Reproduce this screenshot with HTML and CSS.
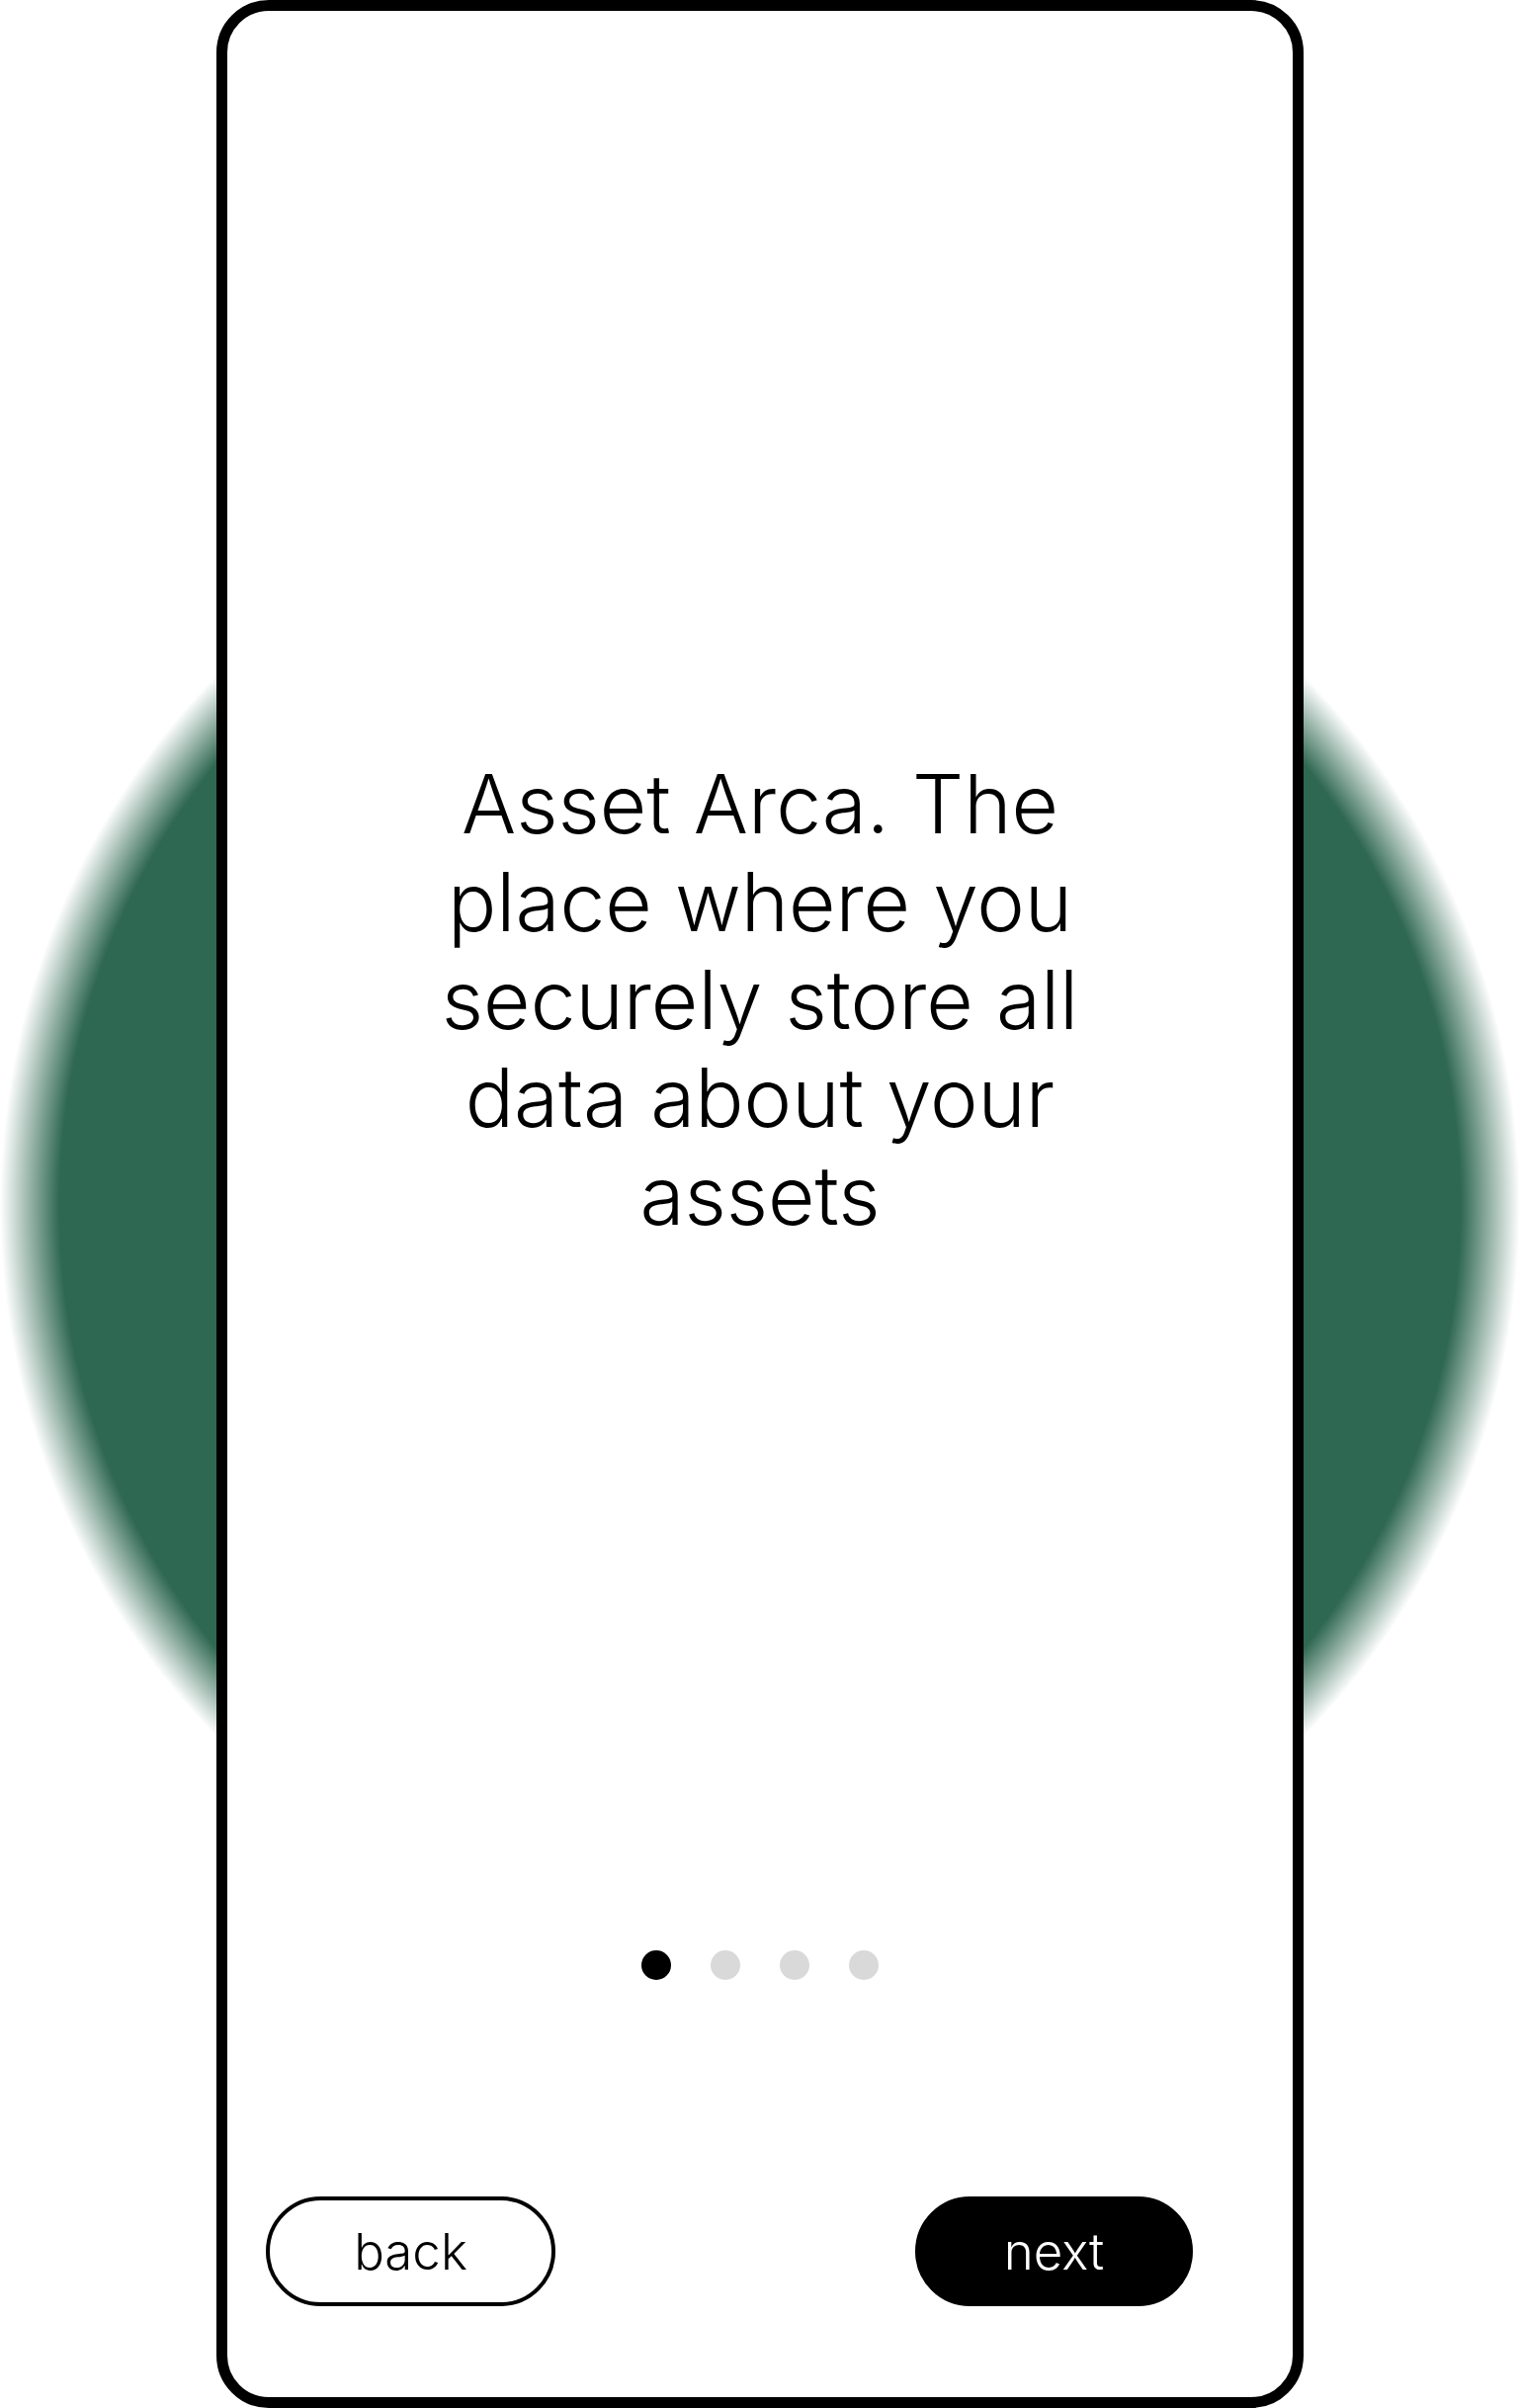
FILE: index.html
```html
<!DOCTYPE html>
<html lang="en">
<head>
<meta charset="utf-8">
<title>Asset Arca</title>
<link rel="stylesheet" href="styles.css">
</head>
<body>
<div class="stage">
  <div class="glow"></div>
  <main class="phone">
    <p class="headline">Asset Arca. The place where you securely store all data about your assets</p>
    <div class="dots">
      <span class="dot active"></span>
      <span class="dot"></span>
      <span class="dot"></span>
      <span class="dot"></span>
    </div>
    <div class="actions">
      <button class="btn btn-back">back</button>
      <button class="btn btn-next">next</button>
    </div>
  </main>
</div>
</body>
</html>
```
FILE: styles.css
```css
* { box-sizing: border-box; }
html, body {
  margin: 0;
  padding: 0;
  background: #ffffff;
}
body {
  font-family: Inter, "Noto Sans", sans-serif;
  font-weight: 300;
  color: #000;
}
.stage {
  position: relative;
  width: 1538px;
  height: 2436px;
  overflow: hidden;
  display: flex;
  justify-content: center;
}
.glow {
  position: absolute;
  left: 0;
  top: 451px;
  width: 1538px;
  height: 1538px;
  background: radial-gradient(circle at center, #2f6852 0, #2f6852 709px, rgba(47, 104, 82, 0) 769px);
}
.phone {
  position: relative;
  width: 1100px;
  height: 2436px;
  border: 11px solid #000;
  border-radius: 53px;
  background: #fff;
  display: flex;
  flex-direction: column;
  align-items: center;
}
.headline {
  margin: 753px 0 0;
  width: 700px;
  font-size: 82px;
  line-height: 99px;
  text-align: center;
  letter-spacing: 0;
}
.dots {
  margin-top: 714px;
  display: flex;
  gap: 40px;
}
.dot {
  width: 30px;
  height: 30px;
  border-radius: 50%;
  background: #d9d9d9;
}
.dot.active { background: #000; }
.actions {
  margin-top: auto;
  margin-bottom: 92px;
  width: 100%;
  display: flex;
  justify-content: space-between;
  padding: 0 101px 0 39px;
}
.btn {
  height: 111px;
  border: 4px solid #000;
  border-radius: 56px;
  font-family: Inter, "Noto Sans", sans-serif;
  font-weight: 300;
  font-size: 51px;
  padding: 0 0;
  cursor: pointer;
}
.btn-back {
  width: 293px;
  background: #fff;
  color: #000;
}
.btn-next {
  width: 281px;
  background: #000;
  color: #fff;
}
```
